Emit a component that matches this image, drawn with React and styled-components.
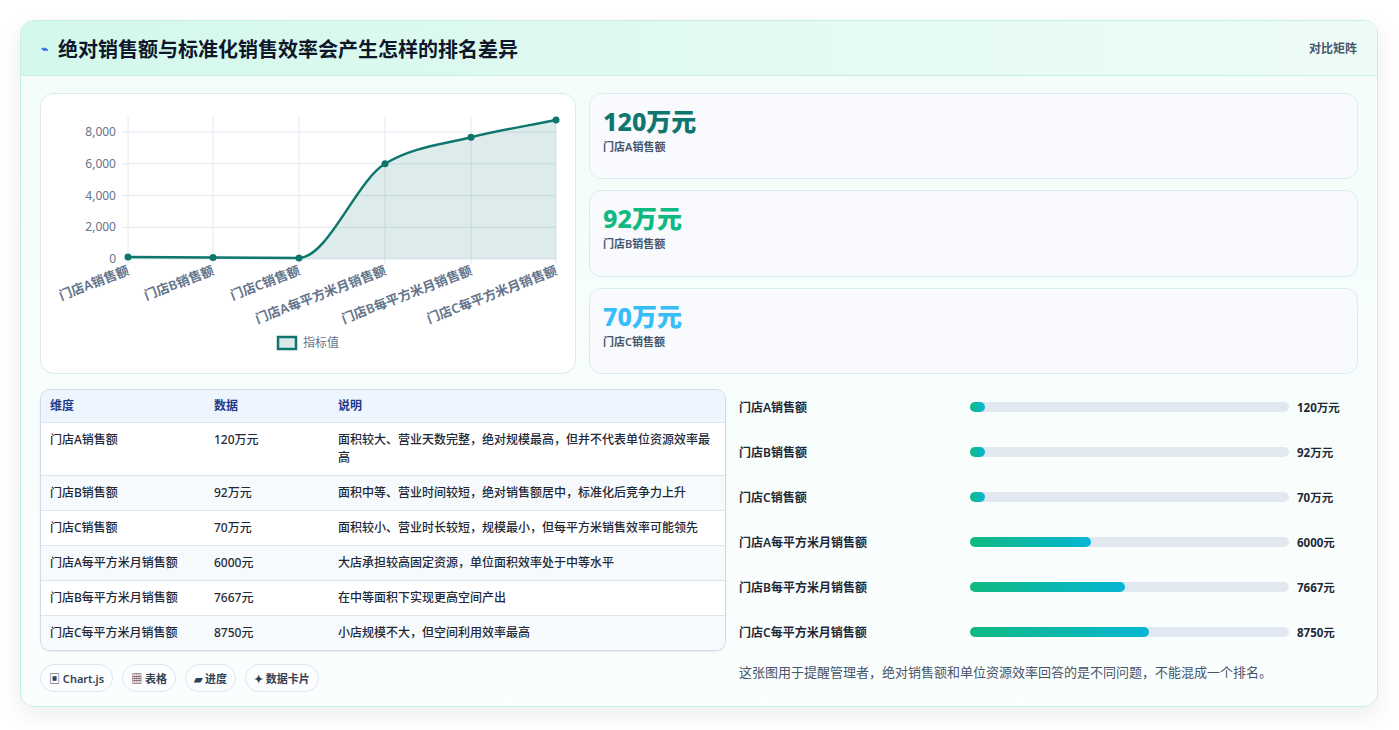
import React from "react";
import styled, { createGlobalStyle } from "styled-components";

const Global = createGlobalStyle`
  body { margin: 0; background: #ffffff; font-family: "Noto Sans", "Noto Sans CJK SC", sans-serif; }
`;

const kpis = [
  { value: "120万元", label: "门店A销售额", color: "#0f766e" },
  { value: "92万元", label: "门店B销售额", color: "#10b981" },
  { value: "70万元", label: "门店C销售额", color: "#38bdf8" },
];

const rows = [
  ["门店A销售额", "120万元", "面积较大、营业天数完整，绝对规模最高，但并不代表单位资源效率最高", 1.5],
  ["门店B销售额", "92万元", "面积中等、营业时间较短，绝对销售额居中，标准化后竞争力上升", 1.5],
  ["门店C销售额", "70万元", "面积较小、营业时长较短，规模最小，但每平方米销售效率可能领先", 1.5],
  ["门店A每平方米月销售额", "6000元", "大店承担较高固定资源，单位面积效率处于中等水平", 38],
  ["门店B每平方米月销售额", "7667元", "在中等面积下实现更高空间产出", 48.6],
  ["门店C每平方米月销售额", "8750元", "小店规模不大，但空间利用效率最高", 56],
];

const Page = styled.div`
  padding: 20px 21px 22px 20px;
`;
const Card = styled.div`
  border: 1px solid #c6efe5;
  border-radius: 14px;
  background: linear-gradient(180deg, #f3fdf9 0%, #fbfefe 100%);
  box-shadow: 0 8px 24px rgba(15, 23, 42, 0.08);
  overflow: hidden;
`;
const Header = styled.div`
  height: 54px;
  display: flex;
  align-items: center;
  justify-content: space-between;
  padding: 0 20px;
  background: linear-gradient(90deg, #d3f8ec 0%, #e4faf3 60%, #eefcf8 100%);
  border-bottom: 1px solid #c9efe4;
`;
const Title = styled.h1`
  margin: 0;
  font-size: 20px;
  font-weight: 700;
  color: #0f172a;
  display: flex;
  align-items: center;
  gap: 10px;
`;
const Bolt = styled.span`
  color: #2563eb;
  font-size: 12px;
`;
const HeaderLink = styled.span`
  font-size: 12px;
  font-weight: 600;
  color: #475569;
`;
const Body = styled.div`
  padding: 17px 19px 14px 19px;
  display: grid;
  grid-template-columns: 536px 1fr;
  column-gap: 13px;
  row-gap: 15px;
`;
const Panel = styled.div`
  background: #fff;
  border: 1px solid #dbe8f0;
  border-radius: 14px;
  height: 279px;
`;
const KpiCol = styled.div`
  display: flex;
  flex-direction: column;
  gap: 11px;
`;
const Kpi = styled.div`
  flex: 1;
  border: 1px solid #d6eef1;
  border-radius: 12px;
  background: #f8fafe;
  padding: 10px 13px;
`;
const KpiValue = styled.div`
  font-size: 25px;
  font-weight: 800;
  color: ${(p) => p.color};
  line-height: 34px;
`;
const KpiLabel = styled.div`
  font-size: 11px;
  font-weight: 600;
  color: #475569;
`;
const Left = styled.div`
  margin-right: -151px;
  width: 686px;
`;
const Table = styled.div`
  border: 1px solid #cfdbe8;
  border-radius: 10px;
  overflow: hidden;
  box-shadow: 0 1px 2px rgba(15, 23, 42, 0.08);
  font-size: 12px;
  color: #1f2937;
`;
const Row = styled.div`
  display: grid;
  grid-template-columns: 164px 124px 1fr;
  padding: ${(p) => (p.head ? "7px 9px 7px" : "8px 9px")};
  background: ${(p) => (p.head ? "#edf5fe" : p.alt ? "#f7fafc" : "#ffffff")};
  color: ${(p) => (p.head ? "#1e3a8a" : "#1f2937")};
  font-weight: ${(p) => (p.head ? 700 : 500)};
  line-height: 18px;
  border-top: ${(p) => (p.first ? "none" : "1px solid #dde5ee")};
  & > span:last-child { padding-right: 4px; }
`;
const Chips = styled.div`
  display: flex;
  gap: 9px;
  margin-top: 13px;
`;
const Chip = styled.span`
  font-size: 11px;
  font-weight: 600;
  color: #334155;
  border: 1px solid #dde5ee;
  background: #fbfdfe;
  border-radius: 14px;
  padding: 5px 8px;
`;
const Right = styled.div`
  margin-left: 150px;
  margin-top: -5px;
`;
const BarRow = styled.div`
  display: grid;
  grid-template-columns: 231px 319px 1fr;
  align-items: center;
  height: 45px;
  font-size: 12px;
  font-weight: 600;
  color: #1f2937;
  & > span:last-child { padding-left: 8px; font-weight: 700; font-size: 11.5px; }
`;
const Track = styled.div`
  height: 10px;
  border-radius: 5px;
  background: #e2e8f0;
`;
const Fill = styled.div`
  height: 100%;
  border-radius: 5px;
  min-width: 15px;
  background: linear-gradient(90deg, #10b981, #06b6d4);
`;
const Note = styled.p`
  margin: 8px 0 0;
  font-size: 13px;
  color: #475569;
`;

const pts = [[87, 163.1], [172, 163.5], [258, 163.9], [344, 69.75], [430, 43.3], [515, 26.1]];
const curve = "M87,163.1 C115,163.3 144,163.5 172,163.5 C201,163.6 229,163.9 258,163.9 C286.7,163.9 315.3,87 344,69.75 C372.7,52.5 401.3,50.6 430,43.3 C458.3,36.1 486.7,31.8 515,26.1";
const labels = ["门店A销售额", "门店B销售额", "门店C销售额", "门店A每平方米月销售额", "门店B每平方米月销售额", "门店C每平方米月销售额"];

const Chart = () => (
  <svg width="535" height="279" fontFamily="'Noto Sans','Noto Sans CJK SC',sans-serif">
    {[0, 2000, 4000, 6000, 8000].map((v) => {
      const y = 165 - (v * 127) / 8000;
      return (
        <g key={v}>
          <line x1="81" x2="515" y1={y} y2={y} stroke="#e2e8f0" />
          <text x="75" y={y + 4} fontSize="12" fill="#64748b" textAnchor="end">{v.toLocaleString("en-US")}</text>
        </g>
      );
    })}
    {pts.map(([x], i) => (
      <line key={i} x1={x} x2={x} y1="22" y2="170" stroke="#e2e8f0" />
    ))}
    <path d={`${curve} L515,165 L87,165 Z`} fill="rgba(15,118,110,0.14)" />
    <path d={curve} fill="none" stroke="#0f766e" strokeWidth="2.5" />
    {pts.map(([x, y], i) => (
      <circle key={i} cx={x} cy={y} r="3.5" fill="#0f766e" />
    ))}
    {labels.map((l, i) => (
      <text key={l} x={pts[i][0] + 2} y="180" fontSize="13" fontWeight="600" fill="#64748b" textAnchor="end" transform={`rotate(-21 ${pts[i][0] + 2} 180)`}>{l}</text>
    ))}
    <rect x="237" y="243" width="18" height="12" fill="#dbe9e8" stroke="#0f766e" strokeWidth="2.5" />
    <text x="262" y="253" fontSize="12" fill="#64748b">指标值</text>
  </svg>
);

export default function App() {
  return (
    <Page>
      <Global />
      <Card>
        <Header>
          <Title><Bolt>⌁</Bolt>绝对销售额与标准化销售效率会产生怎样的排名差异</Title>
          <HeaderLink>对比矩阵</HeaderLink>
        </Header>
        <Body>
          <Panel><Chart /></Panel>
          <KpiCol>
            {kpis.map((k) => (
              <Kpi key={k.label}>
                <KpiValue color={k.color}>{k.value}</KpiValue>
                <KpiLabel>{k.label}</KpiLabel>
              </Kpi>
            ))}
          </KpiCol>
          <Left>
            <Table>
              <Row head first><span>维度</span><span>数据</span><span>说明</span></Row>
              {rows.map((r, i) => (
                <Row key={r[0]} alt={i % 2 === 1}><span>{r[0]}</span><span>{r[1]}</span><span>{r[2]}</span></Row>
              ))}
            </Table>
            <Chips>
              <Chip>▣ Chart.js</Chip>
              <Chip>▦ 表格</Chip>
              <Chip>▰ 进度</Chip>
              <Chip>✦ 数据卡片</Chip>
            </Chips>
          </Left>
          <Right>
            {rows.map((r) => (
              <BarRow key={r[0]}>
                <span>{r[0]}</span>
                <Track><Fill style={{ width: `${r[3]}%` }} /></Track>
                <span>{r[1]}</span>
              </BarRow>
            ))}
            <Note>这张图用于提醒管理者，绝对销售额和单位资源效率回答的是不同问题，不能混成一个排名。</Note>
          </Right>
        </Body>
      </Card>
    </Page>
  );
}
